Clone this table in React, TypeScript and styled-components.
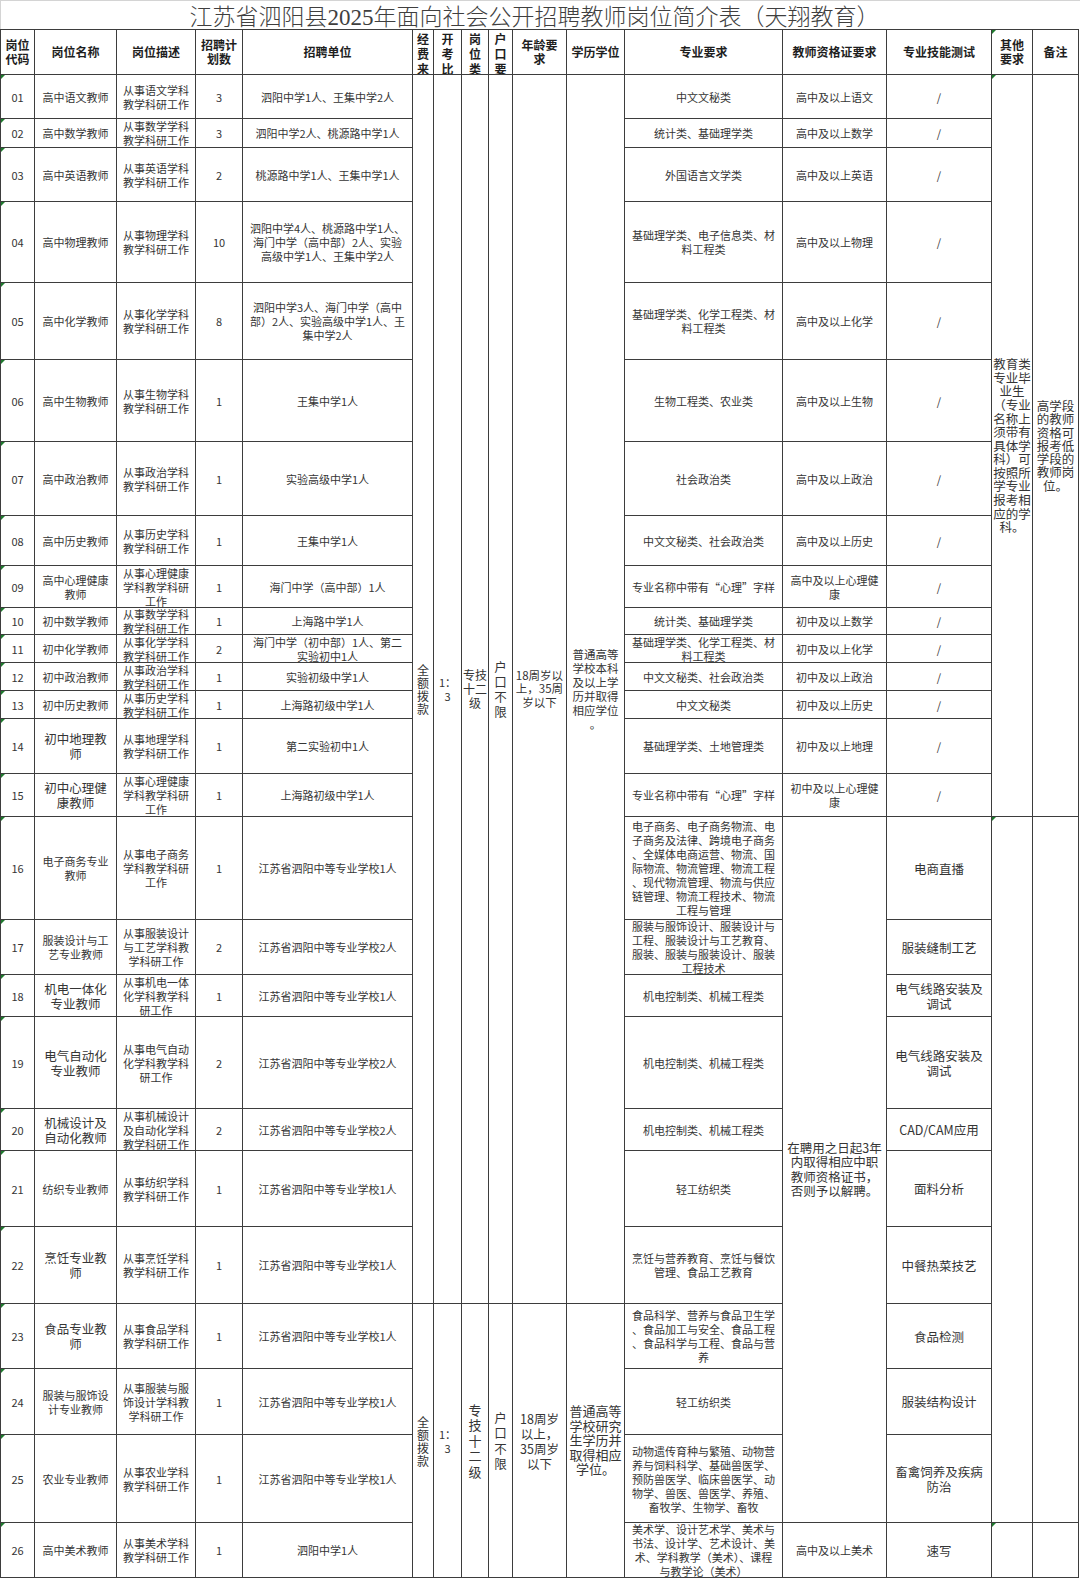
import styled, { createGlobalStyle, css } from 'styled-components';

const GlobalStyle = createGlobalStyle`
  html, body {
    margin: 0;
    padding: 0;
    background: #fff;
  }
  body {
    font-family: "Noto Sans CJK SC", "Noto Sans", sans-serif;
    color: #333;
  }
`;

const COLS = [34, 82, 79, 47, 170, 21, 28, 27, 24, 54, 58, 158, 104, 105, 41, 46];
const ROWS = [
  45, 44, 29, 54, 81, 77, 82, 74, 50, 42, 27, 28, 28, 28, 55, 43, 103, 55, 42, 92, 42, 76, 77, 65,
  66, 88, 55,
];
const LINE = '#3d3d3d';

interface Post {
  code: string;
  name: string;
  big?: boolean;
  desc: string;
  num: string;
  unit: string;
  major: string;
  cert?: string;
  skill: string;
}

const posts: Post[] = [
  { code: '01', name: '高中语文教师', desc: '从事语文学科\n教学科研工作', num: '3', unit: '泗阳中学1人、王集中学2人', major: '中文文秘类', cert: '高中及以上语文', skill: '/' },
  { code: '02', name: '高中数学教师', desc: '从事数学学科\n教学科研工作', num: '3', unit: '泗阳中学2人、桃源路中学1人', major: '统计类、基础理学类', cert: '高中及以上数学', skill: '/' },
  { code: '03', name: '高中英语教师', desc: '从事英语学科\n教学科研工作', num: '2', unit: '桃源路中学1人、王集中学1人', major: '外国语言文学类', cert: '高中及以上英语', skill: '/' },
  { code: '04', name: '高中物理教师', desc: '从事物理学科\n教学科研工作', num: '10', unit: '泗阳中学4人、桃源路中学1人、\n海门中学（高中部）2人、实验\n高级中学1人、王集中学2人', major: '基础理学类、电子信息类、材\n料工程类', cert: '高中及以上物理', skill: '/' },
  { code: '05', name: '高中化学教师', desc: '从事化学学科\n教学科研工作', num: '8', unit: '泗阳中学3人、海门中学（高中\n部）2人、实验高级中学1人、王\n集中学2人', major: '基础理学类、化学工程类、材\n料工程类', cert: '高中及以上化学', skill: '/' },
  { code: '06', name: '高中生物教师', desc: '从事生物学科\n教学科研工作', num: '1', unit: '王集中学1人', major: '生物工程类、农业类', cert: '高中及以上生物', skill: '/' },
  { code: '07', name: '高中政治教师', desc: '从事政治学科\n教学科研工作', num: '1', unit: '实验高级中学1人', major: '社会政治类', cert: '高中及以上政治', skill: '/' },
  { code: '08', name: '高中历史教师', desc: '从事历史学科\n教学科研工作', num: '1', unit: '王集中学1人', major: '中文文秘类、社会政治类', cert: '高中及以上历史', skill: '/' },
  { code: '09', name: '高中心理健康\n教师', desc: '从事心理健康\n学科教学科研\n工作', num: '1', unit: '海门中学（高中部）1人', major: '专业名称中带有“心理”字样', cert: '高中及以上心理健\n康', skill: '/' },
  { code: '10', name: '初中数学教师', desc: '从事数学学科\n教学科研工作', num: '1', unit: '上海路中学1人', major: '统计类、基础理学类', cert: '初中及以上数学', skill: '/' },
  { code: '11', name: '初中化学教师', desc: '从事化学学科\n教学科研工作', num: '2', unit: '海门中学（初中部）1人、第二\n实验初中1人', major: '基础理学类、化学工程类、材\n料工程类', cert: '初中及以上化学', skill: '/' },
  { code: '12', name: '初中政治教师', desc: '从事政治学科\n教学科研工作', num: '1', unit: '实验初级中学1人', major: '中文文秘类、社会政治类', cert: '初中及以上政治', skill: '/' },
  { code: '13', name: '初中历史教师', desc: '从事历史学科\n教学科研工作', num: '1', unit: '上海路初级中学1人', major: '中文文秘类', cert: '初中及以上历史', skill: '/' },
  { code: '14', name: '初中地理教\n师', big: true, desc: '从事地理学科\n教学科研工作', num: '1', unit: '第二实验初中1人', major: '基础理学类、土地管理类', cert: '初中及以上地理', skill: '/' },
  { code: '15', name: '初中心理健\n康教师', big: true, desc: '从事心理健康\n学科教学科研\n工作', num: '1', unit: '上海路初级中学1人', major: '专业名称中带有“心理”字样', cert: '初中及以上心理健\n康', skill: '/' },
  { code: '16', name: '电子商务专业\n教师', desc: '从事电子商务\n学科教学科研\n工作', num: '1', unit: '江苏省泗阳中等专业学校1人', major: '电子商务、电子商务物流、电\n子商务及法律、跨境电子商务\n、全媒体电商运营、物流、国\n际物流、物流管理、物流工程\n、现代物流管理、物流与供应\n链管理、物流工程技术、物流\n工程与管理', skill: '电商直播' },
  { code: '17', name: '服装设计与工\n艺专业教师', desc: '从事服装设计\n与工艺学科教\n学科研工作', num: '2', unit: '江苏省泗阳中等专业学校2人', major: '服装与服饰设计、服装设计与\n工程、服装设计与工艺教育、\n服装、服装与服装设计、服装\n工程技术', skill: '服装缝制工艺' },
  { code: '18', name: '机电一体化\n专业教师', big: true, desc: '从事机电一体\n化学科教学科\n研工作', num: '1', unit: '江苏省泗阳中等专业学校1人', major: '机电控制类、机械工程类', skill: '电气线路安装及\n调试' },
  { code: '19', name: '电气自动化\n专业教师', big: true, desc: '从事电气自动\n化学科教学科\n研工作', num: '2', unit: '江苏省泗阳中等专业学校2人', major: '机电控制类、机械工程类', skill: '电气线路安装及\n调试' },
  { code: '20', name: '机械设计及\n自动化教师', big: true, desc: '从事机械设计\n及自动化学科\n教学科研工作', num: '2', unit: '江苏省泗阳中等专业学校2人', major: '机电控制类、机械工程类', skill: 'CAD/CAM应用' },
  { code: '21', name: '纺织专业教师', desc: '从事纺织学科\n教学科研工作', num: '1', unit: '江苏省泗阳中等专业学校1人', major: '轻工纺织类', skill: '面料分析' },
  { code: '22', name: '烹饪专业教\n师', big: true, desc: '从事烹饪学科\n教学科研工作', num: '1', unit: '江苏省泗阳中等专业学校1人', major: '烹饪与营养教育、烹饪与餐饮\n管理、食品工艺教育', skill: '中餐热菜技艺' },
  { code: '23', name: '食品专业教\n师', big: true, desc: '从事食品学科\n教学科研工作', num: '1', unit: '江苏省泗阳中等专业学校1人', major: '食品科学、营养与食品卫生学\n、食品加工与安全、食品工程\n、食品科学与工程、食品与营\n养', skill: '食品检测' },
  { code: '24', name: '服装与服饰设\n计专业教师', desc: '从事服装与服\n饰设计学科教\n学科研工作', num: '1', unit: '江苏省泗阳中等专业学校1人', major: '轻工纺织类', skill: '服装结构设计' },
  { code: '25', name: '农业专业教师', desc: '从事农业学科\n教学科研工作', num: '1', unit: '江苏省泗阳中等专业学校1人', major: '动物遗传育种与繁殖、动物营\n养与饲料科学、基础兽医学、\n预防兽医学、临床兽医学、动\n物学、兽医、兽医学、养殖、\n畜牧学、生物学、畜牧', skill: '畜禽饲养及疾病\n防治' },
  { code: '26', name: '高中美术教师', desc: '从事美术学科\n教学科研工作', num: '1', unit: '泗阳中学1人', major: '美术学、设计艺术学、美术与\n书法、设计学、艺术设计、美\n术、学科教学（美术）、课程\n与教学论（美术）', cert: '高中及以上美术', skill: '速写' },
];

const heads: { text: string; top?: boolean }[] = [
  { text: '岗位\n代码' },
  { text: '岗位名称' },
  { text: '岗位描述' },
  { text: '招聘计\n划数' },
  { text: '招聘单位' },
  { text: '经\n费\n来\n源', top: true },
  { text: '开\n考\n比\n例', top: true },
  { text: '岗\n位\n类\n别', top: true },
  { text: '户\n口\n要\n求', top: true },
  { text: '年龄要\n求' },
  { text: '学历学位' },
  { text: '专业要求' },
  { text: '教师资格证要求' },
  { text: '专业技能测试' },
  { text: '其他\n要求' },
  { text: '备注' },
];

export default function App() {
  const cells: JSX.Element[] = [];

  heads.forEach((h, i) => {
    cells.push(
      <HeadCell key={`h${i}`} $top={h.top} $mark={i === 14}>
        {h.text}
      </HeadCell>,
    );
  });

  posts.forEach((p, i) => {
    const k = p.code;
    cells.push(<Cell key={`${k}a`} $mark>{p.code}</Cell>);
    cells.push(
      <Cell key={`${k}b`} $size={p.big ? 12.5 : 11} $lh={p.big ? 15 : 14}>
        {p.name}
      </Cell>,
    );
    cells.push(<Cell key={`${k}c`}>{p.desc}</Cell>);
    cells.push(<Cell key={`${k}d`}>{p.num}</Cell>);
    cells.push(<Cell key={`${k}e`}>{p.unit}</Cell>);

    // merged blocks: 经费来源 .. 学历学位
    if (i === 0) {
      cells.push(
        <Cell key="f1" $rows={22} $size={12} $lh={13}>{'全\n额\n拨\n款'}</Cell>,
        <Cell key="g1" $rows={22}>{'1：\n3'}</Cell>,
        <Cell key="h1" $rows={22} $size={12} $lh={14}>{'专技\n十二\n级'}</Cell>,
        <Cell key="i1" $rows={22} $size={12.5} $lh={15}>{'户\n口\n不\n限'}</Cell>,
        <Cell key="j1" $rows={22} $size={11.5} $lh={13.5}>{'18周岁以\n上，35周\n岁以下'}</Cell>,
        <Cell key="k1" $rows={22} $size={11.5} $lh={14}>{'普通高等\n学校本科\n及以上学\n历并取得\n相应学位\n。'}</Cell>,
      );
    }
    if (i === 22) {
      cells.push(
        <Cell key="f2" $rows={4} $size={12} $lh={13}>{'全\n额\n拨\n款'}</Cell>,
        <Cell key="g2" $rows={4}>{'1：\n3'}</Cell>,
        <Cell key="h2" $rows={4} $size={13} $lh={15.5}>{'专\n技\n十\n二\n级'}</Cell>,
        <Cell key="i2" $rows={4} $size={12.5} $lh={15.5}>{'户\n口\n不\n限'}</Cell>,
        <Cell key="j2" $rows={4} $size={12.5} $lh={15}>{'18周岁\n以上，\n35周岁\n以下'}</Cell>,
        <Cell key="k2" $rows={4} $size={13} $lh={14.5}>{'普通高等\n学校研究\n生学历并\n取得相应\n学位。'}</Cell>,
      );
    }

    cells.push(<Cell key={`${k}l`}>{p.major}</Cell>);

    if (p.cert) {
      cells.push(<Cell key={`${k}m`}>{p.cert}</Cell>);
    } else if (i === 15) {
      cells.push(
        <Cell key="m16" $rows={10} $size={12.5} $lh={14.5}>
          {'在聘用之日起3年\n内取得相应中职\n教师资格证书，\n否则予以解聘。'}
        </Cell>,
      );
    }

    const special = i >= 15;
    cells.push(
      <Cell key={`${k}n`} $size={special ? 12.5 : 11} $lh={special ? 15 : 14}>
        {p.skill}
      </Cell>,
    );

    if (i === 0) {
      cells.push(
        <Cell key="o1" $rows={15} $size={12.5} $lh={13.6} $mark>
          {'教育类\n专业毕\n业生\n（专业\n名称上\n须带有\n具体学\n科）可\n按照所\n学专业\n报考相\n应的学\n科。'}
        </Cell>,
        <Cell key="p1" $rows={15} $size={12.5} $lh={13.2}>
          {'高学段\n的教师\n资格可\n报考低\n学段的\n教师岗\n位。'}
        </Cell>,
      );
    }
    if (i === 15) {
      cells.push(<Cell key="o2" $rows={10} $mark />, <Cell key="p2" $rows={10} />);
    }
    if (i === 25) {
      cells.push(<Cell key="o3" $mark />, <Cell key="p3" />);
    }
  });

  return (
    <>
      <GlobalStyle />
      <Page>
        <TitleBar>江苏省泗阳县2025年面向社会公开招聘教师岗位简介表（天翔教育）</TitleBar>
        <Sheet>{cells}</Sheet>
      </Page>
    </>
  );
}

const Page = styled.div`
  width: 1080px;
  background: #fff;
`;

const TitleBar = styled.div`
  box-sizing: border-box;
  width: 1080px;
  height: 29px;
  display: flex;
  align-items: center;
  justify-content: center;
  padding-right: 12px;
  border-top: 1px solid #d4d4d4;
  border-left: 1px solid #d4d4d4;
  font-family: "Liberation Serif", "Noto Sans CJK SC", serif;
  font-size: 23px;
  font-weight: 300;
  color: #3f3f3f;
  white-space: nowrap;
`;

const Sheet = styled.div`
  display: grid;
  grid-template-columns: ${COLS.map((c) => `${c}px`).join(' ')};
  grid-template-rows: ${ROWS.map((r) => `${r}px`).join(' ')};
  width: max-content;
  border-top: 1px solid ${LINE};
  border-left: 1px solid ${LINE};
`;

const Cell = styled.div<{ $rows?: number; $size?: number; $lh?: number; $mark?: boolean }>`
  grid-row: span ${(p) => p.$rows ?? 1};
  position: relative;
  box-sizing: border-box;
  display: flex;
  align-items: center;
  justify-content: center;
  min-width: 0;
  min-height: 0;
  overflow: hidden;
  padding: 0 1px;
  border-right: 1px solid ${LINE};
  border-bottom: 1px solid ${LINE};
  font-size: ${(p) => p.$size ?? 11}px;
  line-height: ${(p) => p.$lh ?? 14}px;
  text-align: center;
  white-space: pre;
  color: #353535;

  ${(p) =>
    p.$mark &&
    css`
      &::before {
        content: '';
        position: absolute;
        top: 0;
        left: 0;
        border-top: 4px solid #1f7a2e;
        border-right: 4px solid transparent;
      }
    `}
`;

const HeadCell = styled(Cell)<{ $top?: boolean }>`
  font-size: 12px;
  line-height: 14px;
  font-weight: 700;
  color: #1e1e1e;

  ${(p) =>
    p.$top &&
    css`
      align-items: flex-start;
      padding-top: 1px;
      line-height: 15px;
    `}
`;
